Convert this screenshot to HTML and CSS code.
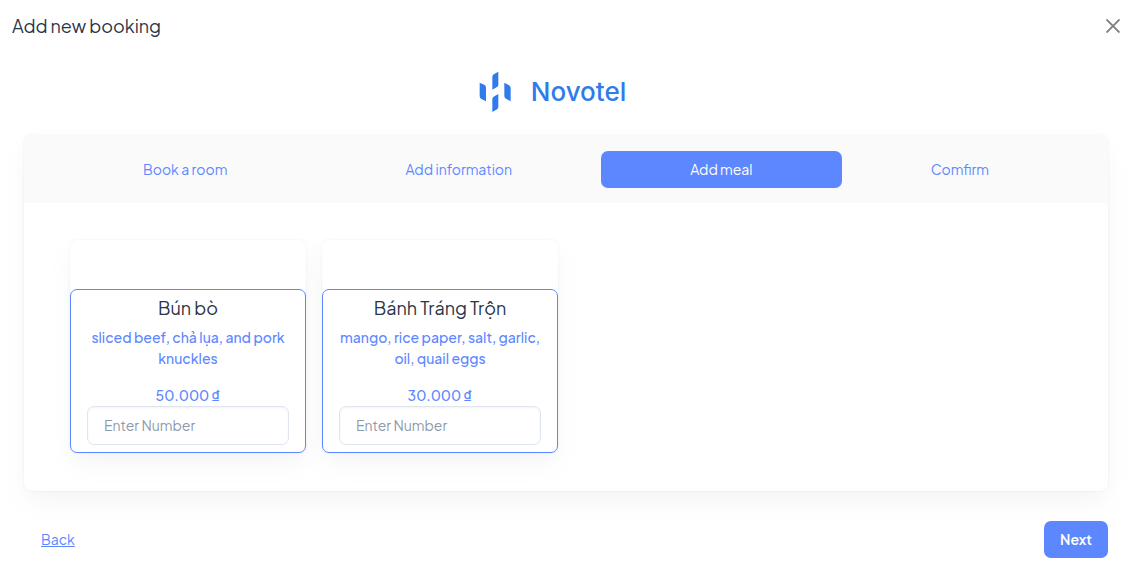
FILE: index.html
```html
<!DOCTYPE html>
<html lang="en">
<head>
<meta charset="utf-8">
<meta name="viewport" content="width=device-width, initial-scale=1">
<title>Add new booking</title>
<link rel="stylesheet" href="styles.css">
</head>
<body>
<div class="modal">
  <header class="modal-header">
    <h1 class="modal-title">Add new booking</h1>
    <button class="close" type="button" aria-label="Close">
      <svg width="14" height="14" viewBox="0 0 14 14" aria-hidden="true"><path d="M0.5 0.5 13.5 13.5M13.5 0.5 0.5 13.5" stroke="#7f7f7f" stroke-width="1.9" fill="none"/></svg>
    </button>
  </header>
  <div class="brand">
    <svg class="brand-mark" width="32" height="42" viewBox="52 32 96 126" aria-hidden="true">
      <g fill="#2f7bea">
        <path d="M54 67 68 73Q73 76 73 82V123L59 116Q54 113 54 107Z"/>
        <path d="M110 34V74Q110 78 106 80L92 88V50Q92 45 96 42Z"/>
        <path d="M128 67 142 75Q147 78 147 83V123L133 115Q128 112 128 107Z"/>
        <path d="M110 101V140Q110 144 106 147L92 155V116Q92 112 96 109Z"/>
      </g>
    </svg>
    <span class="brand-name">Novotel</span>
  </div>
  <main class="panel">
    <nav class="tabs" aria-label="Booking steps">
      <a class="tab" href="#room">Book a room</a>
      <a class="tab" href="#information">Add information</a>
      <a class="tab tab-active" href="#meal" aria-current="step">Add meal</a>
      <a class="tab" href="#confirm">Comfirm</a>
    </nav>
    <div class="meals">
      <article class="meal">
        <div class="meal-body">
          <h2 class="meal-name">Bún bò</h2>
          <p class="meal-text">sliced beef, chả lụa, and pork knuckles</p>
          <p class="meal-price">50.000 ₫</p>
          <input class="quantity" type="text" inputmode="numeric" placeholder="Enter Number" aria-label="Number of Bún bò">
        </div>
      </article>
      <article class="meal">
        <div class="meal-body">
          <h2 class="meal-name">Bánh Tráng Trộn</h2>
          <p class="meal-text">mango, rice paper, salt, garlic, oil, quail eggs</p>
          <p class="meal-price">30.000 ₫</p>
          <input class="quantity" type="text" inputmode="numeric" placeholder="Enter Number" aria-label="Number of Bánh Tráng Trộn">
        </div>
      </article>
    </div>
  </main>
  <footer class="modal-footer">
    <a class="back" href="#information">Back</a>
    <button class="next" type="button">Next</button>
  </footer>
</div>
</body>
</html>
```
FILE: styles.css
```css
* { box-sizing: border-box; }
body {
  margin: 0;
  background: #fff;
  color: #2a3547;
  font: 14px/21px "Plus Jakarta Sans", Inter, "Liberation Sans", sans-serif;
}
h1, h2, p { margin: 0; }
.modal-header {
  display: flex;
  align-items: center;
  justify-content: space-between;
  padding: 12px 8px 12px 12px;
}
.modal-title { font-size: 18px; line-height: 28px; font-weight: 400; }
.close {
  display: flex;
  padding: 2px;
  border: 0;
  background: none;
}
.brand {
  display: flex;
  align-items: center;
  justify-content: center;
  gap: 20px;
  height: 42px;
  margin: 19px 24px 22px;
  padding-right: 25px;
}
.brand-name { color: #2f7bea; font: 500 26px/32px Inter, sans-serif; }
.panel {
  margin: 0 22px 0 24px;
  border-radius: 7px;
  overflow: hidden;
  box-shadow: 0 12px 24px -4px rgba(145, 158, 171, 0.12), 0 0 2px rgba(145, 158, 171, 0.2);
}
.tabs { display: flex; padding: 16px 30px 15px; background: #fafafa; }
.tab {
  flex: 1 1 auto;
  padding: 8px 16px;
  border-radius: 7px;
  color: #5d87ff;
  text-align: center;
  text-decoration: none;
}
.tab-active { background: #5d87ff; color: #fff; }
.meals {
  display: grid;
  grid-template-columns: repeat(4, 1fr);
  gap: 16px;
  padding: 37px 46px 38px;
}
.meal {
  padding-top: 49px;
  border-radius: 7px;
  box-shadow: 0 12px 24px -4px rgba(145, 158, 171, 0.12), 0 0 2px rgba(145, 158, 171, 0.2);
}
.meal-body {
  padding: 7px 16px;
  border: 1px solid #5d87ff;
  border-radius: 7px;
  text-align: center;
}
.meal-name { font-size: 18px; line-height: 22px; font-weight: 400; margin-bottom: 8px; }
.meal-text, .meal-price { color: #5d87ff; font-weight: 500; }
.meal-text { margin-bottom: 16px; }
.quantity {
  display: block;
  width: 100%;
  padding: 8px 16px;
  border: 1px solid #dfe5ef;
  border-radius: 7px;
  background: transparent;
  box-shadow: inset 0 1px 2px rgba(0, 0, 0, 0.05);
  color: #5a6a85;
  font: inherit;
}
.quantity::placeholder { color: #8e99ac; opacity: 1; }
.modal-footer {
  display: flex;
  align-items: center;
  justify-content: space-between;
  padding: 30px 22px 9px 41px;
}
.back { color: #5d87ff; }
.next {
  padding: 8px 16px;
  border: 0;
  border-radius: 7px;
  background: #5d87ff;
  color: #fff;
  font: inherit;
  font-weight: 600;
}
```
